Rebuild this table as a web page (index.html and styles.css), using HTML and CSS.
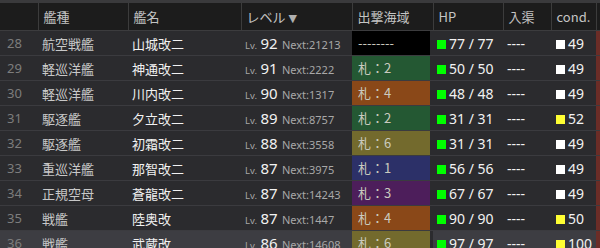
FILE: index.html
```html
<!DOCTYPE html>
<html lang="ja">
<head>
<meta charset="utf-8">
<link rel="stylesheet" href="styles.css">
</head>
<body>
<div class="topbar"></div>
<table class="ships">
  <colgroup>
    <col class="c-no"><col class="c-type"><col class="c-name"><col class="c-lv"><col class="c-sea"><col class="c-hp"><col class="c-dock"><col class="c-cond"><col class="c-edge">
  </colgroup>
  <thead>
    <tr>
      <th></th><th>艦種</th><th>艦名</th><th>レベル <span class="arrow">▼</span></th><th>出撃海域</th><th>HP</th><th>入渠</th><th>cond.</th><th class="edge"></th>
    </tr>
  </thead>
  <tbody>
    <tr><td class="no">28</td><td class="type">航空戦艦</td><td class="name">山城改二</td><td class="lv"><span class="lvl">Lv.</span> <span class="lvn">92</span> <span class="next">Next:21213</span></td><td class="sea sea-none"><div>--------</div></td><td class="hp"><i class="sq g"></i>77 / 77</td><td class="dock">----</td><td class="cond"><i class="sq w"></i>49</td><td class="edge"></td></tr>
    <tr><td class="no">29</td><td class="type">軽巡洋艦</td><td class="name">神通改二</td><td class="lv"><span class="lvl">Lv.</span> <span class="lvn">91</span> <span class="next">Next:2222</span></td><td class="sea sea-2"><div>札：2</div></td><td class="hp"><i class="sq g"></i>50 / 50</td><td class="dock">----</td><td class="cond"><i class="sq w"></i>49</td><td class="edge"></td></tr>
    <tr><td class="no">30</td><td class="type">軽巡洋艦</td><td class="name">川内改二</td><td class="lv"><span class="lvl">Lv.</span> <span class="lvn">90</span> <span class="next">Next:1317</span></td><td class="sea sea-4"><div>札：4</div></td><td class="hp"><i class="sq g"></i>48 / 48</td><td class="dock">----</td><td class="cond"><i class="sq w"></i>49</td><td class="edge"></td></tr>
    <tr><td class="no">31</td><td class="type">駆逐艦</td><td class="name">夕立改二</td><td class="lv"><span class="lvl">Lv.</span> <span class="lvn">89</span> <span class="next">Next:8757</span></td><td class="sea sea-2"><div>札：2</div></td><td class="hp"><i class="sq g"></i>31 / 31</td><td class="dock">----</td><td class="cond"><i class="sq y"></i>52</td><td class="edge"></td></tr>
    <tr><td class="no">32</td><td class="type">駆逐艦</td><td class="name">初霜改二</td><td class="lv"><span class="lvl">Lv.</span> <span class="lvn">88</span> <span class="next">Next:3558</span></td><td class="sea sea-6"><div>札：6</div></td><td class="hp"><i class="sq g"></i>31 / 31</td><td class="dock">----</td><td class="cond"><i class="sq w"></i>49</td><td class="edge"></td></tr>
    <tr><td class="no">33</td><td class="type">重巡洋艦</td><td class="name">那智改二</td><td class="lv"><span class="lvl">Lv.</span> <span class="lvn">87</span> <span class="next">Next:3975</span></td><td class="sea sea-1"><div>札：1</div></td><td class="hp"><i class="sq g"></i>56 / 56</td><td class="dock">----</td><td class="cond"><i class="sq w"></i>49</td><td class="edge"></td></tr>
    <tr><td class="no">34</td><td class="type">正規空母</td><td class="name">蒼龍改二</td><td class="lv"><span class="lvl">Lv.</span> <span class="lvn">87</span> <span class="next">Next:14243</span></td><td class="sea sea-3"><div>札：3</div></td><td class="hp"><i class="sq g"></i>67 / 67</td><td class="dock">----</td><td class="cond"><i class="sq w"></i>49</td><td class="edge"></td></tr>
    <tr><td class="no">35</td><td class="type">戦艦</td><td class="name">陸奥改</td><td class="lv"><span class="lvl">Lv.</span> <span class="lvn">87</span> <span class="next">Next:1447</span></td><td class="sea sea-4"><div>札：4</div></td><td class="hp"><i class="sq g"></i>90 / 90</td><td class="dock">----</td><td class="cond"><i class="sq y"></i>50</td><td class="edge"></td></tr>
    <tr class="hover"><td class="no">36</td><td class="type">戦艦</td><td class="name">武蔵改</td><td class="lv"><span class="lvl">Lv.</span> <span class="lvn">86</span> <span class="next">Next:14608</span></td><td class="sea sea-6"><div>札：6</div></td><td class="hp"><i class="sq g"></i>97 / 97</td><td class="dock">----</td><td class="cond"><i class="sq y"></i>100</td><td class="edge"></td></tr>
  </tbody>
</table>
</body>
</html>
```

FILE: styles.css
```css
html, body {
  margin: 0;
  padding: 0;
  background: #2b2b2e;
  overflow: hidden;
}
body {
  width: 600px;
  height: 248px;
  font-family: "Noto Sans", "Noto Sans CJK JP", sans-serif;
  color: #ddd;
}
.topbar {
  height: 3px;
  background: #3a3a3c;
}
.ships {
  border-collapse: collapse;
  table-layout: fixed;
  width: 600px;
}
.c-no { width: 38px; }
.c-type { width: 90px; }
.c-name { width: 113px; }
.c-lv { width: 111px; }
.c-sea { width: 81px; }
.c-hp { width: 70px; }
.c-dock { width: 48px; }
.c-cond { width: 45px; }
.c-edge { width: 4px; }

thead th {
  background: #1c1c1c;
  height: 27px;
  padding: 0 0 0 5px;
  text-align: left;
  font-weight: normal;
  font-size: 13px;
  color: #c4c4c4;
  font-family: "Noto Sans CJK JP", sans-serif;
  border-left: 1px solid #3c3c3c;
  border-bottom: 1px solid #3c3c3e;
  white-space: nowrap;
  overflow: hidden;
}
thead th:first-child { border-left: none; }
thead th.edge { padding: 0; }
.arrow {
  color: #b0b0b0;
  font-size: 11px;
  font-family: "DejaVu Sans", sans-serif;
}

tbody td {
  height: 24px;
  padding: 0 0 0 4px;
  border-bottom: 1px solid #3b3b3f;
  white-space: nowrap;
  overflow: hidden;
  font-size: 13px;
  vertical-align: middle;
}
tbody tr.hover td { background: #3d3d42; }
tbody tr.hover td.sea { background: transparent; }

td.no {
  color: #7d7d7d;
  padding-left: 7px;
  font-size: 13px;
}
td.type {
  color: #c8c8c8;
  font-family: "Noto Sans CJK JP", sans-serif;
  padding-left: 4px;
}
td.name {
  color: #f2f2f2;
  font-family: "Noto Sans CJK JP", sans-serif;
  padding-left: 4px;
}
td.lv {
  padding-left: 4px;
}
.lvl {
  font-size: 9.5px;
  color: #a8a8a8;
}
.lvn {
  font-size: 15px;
  color: #f2f2f2;
}
.next {
  font-size: 11px;
  color: #a8a8a8;
  margin-left: 1px;
}

td.sea {
  padding: 0;
}
td.sea div {
  width: 78px;
  height: 24px;
  line-height: 24px;
  padding-left: 6px;
  box-sizing: border-box;
  font-size: 13px;
  color: #cbcbbf;
  font-family: "Noto Sans CJK JP", sans-serif;
}
.sea-none div { background: #000; color: #eee; font-family: "Noto Sans", sans-serif; }
.sea-1 div { background: #2c3068; }
.sea-2 div { background: #245833; }
.sea-3 div { background: #4d1e5b; }
.sea-4 div { background: #8a4818; }
.sea-6 div { background: #736a2d; }

td.hp {
  color: #f2f2f2;
  font-size: 14px;
  padding-left: 4px;
}
td.dock {
  color: #f2f2f2;
  font-size: 14px;
  padding-left: 4px;
}
td.cond {
  color: #f2f2f2;
  font-size: 14px;
  padding-left: 5px;
}
.sq {
  display: inline-block;
  width: 9px;
  height: 9px;
  margin-right: 3px;
  vertical-align: -0.5px;
}
.sq.g { background: #00ff00; }
.sq.w { background: #ffffff; }
.sq.y { background: #ffff33; }

tbody td.edge {
  padding: 0;
  background: #6b2d27;
}
tbody tr.hover td.edge { background: #6b2d27; }
```
